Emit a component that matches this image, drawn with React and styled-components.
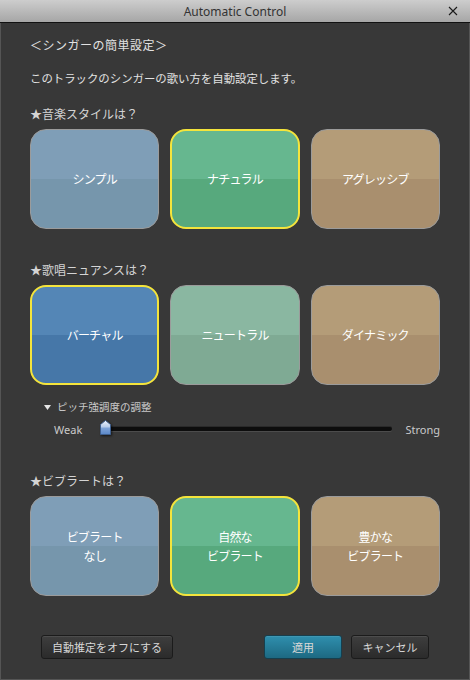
import React from "react";
import { styled, createGlobalStyle } from "styled-components";

const GlobalStyle = createGlobalStyle`
  html, body {
    margin: 0;
    padding: 0;
    background: #383838;
  }
  * {
    box-sizing: border-box;
  }
`;

const palette = {
  slate: ["#7f9eb7", "#7696ac"],
  green: ["#66b78f", "#57a97d"],
  tan: ["#b49c78", "#a98f6e"],
  blue: ["#5486b6", "#4677a8"],
  teal: ["#8ab7a1", "#7faa94"],
};

const sections = [
  {
    title: "★音楽スタイルは？",
    gap: 20,
    options: [
      { label: ["シンプル"], tone: "slate" },
      { label: ["ナチュラル"], tone: "green", selected: true },
      { label: ["アグレッシブ"], tone: "tan" },
    ],
  },
  {
    title: "★歌唱ニュアンスは？",
    gap: 33,
    options: [
      { label: ["バーチャル"], tone: "blue", selected: true },
      { label: ["ニュートラル"], tone: "teal" },
      { label: ["ダイナミック"], tone: "tan" },
    ],
  },
];

const vibrato = {
  title: "★ビブラートは？",
  options: [
    { label: ["ビブラート", "なし"], tone: "slate" },
    { label: ["自然な", "ビブラート"], tone: "green", selected: true },
    { label: ["豊かな", "ビブラート"], tone: "tan" },
  ],
};

const App = () => {
  return (
    <>
      <GlobalStyle />
      <Window>
        <TitleBar>
          <span />
          <Title>Automatic Control</Title>
          <CloseButton>
            <svg width="10" height="10" viewBox="0 0 10 10">
              <path d="M1 1 L9 9 M9 1 L1 9" stroke="#1a1a1a" strokeWidth="1.1" />
            </svg>
          </CloseButton>
        </TitleBar>

        <Body>
          <Heading>＜シンガーの簡単設定＞</Heading>
          <Description>このトラックのシンガーの歌い方を自動設定します。</Description>

          {sections.map((s) => (
            <React.Fragment key={s.title}>
              <SectionLabel $gap={s.gap}>{s.title}</SectionLabel>
              <ChoiceRow>
                {s.options.map((o) => (
                  <Choice key={o.label.join()} $tone={o.tone} $selected={o.selected}>
                    {o.label.map((line) => (
                      <span key={line}>{line}</span>
                    ))}
                  </Choice>
                ))}
              </ChoiceRow>
            </React.Fragment>
          ))}

          <PitchLabel>
            <svg width="7" height="5" viewBox="0 0 7 5">
              <path d="M0 0 H7 L3.5 5 Z" fill="#e6e6e6" />
            </svg>
            ピッチ強調度の調整
          </PitchLabel>
          <SliderRow>
            <SliderText>Weak</SliderText>
            <Track>
              <Thumb>
                <svg width="11" height="15" viewBox="0 0 11 15">
                  <defs>
                    <linearGradient id="thumb" x1="0" y1="0" x2="0" y2="1">
                      <stop offset="0" stopColor="#eef3fb" />
                      <stop offset="0.45" stopColor="#b8cdea" />
                      <stop offset="0.55" stopColor="#7ea3d8" />
                      <stop offset="1" stopColor="#5a87c8" />
                    </linearGradient>
                  </defs>
                  <path
                    d="M5.5 0.5 L10.5 4.5 V14.5 H0.5 V4.5 Z"
                    fill="url(#thumb)"
                    stroke="#3e5f8e"
                    strokeWidth="1"
                  />
                </svg>
              </Thumb>
            </Track>
            <SliderText $end>Strong</SliderText>
          </SliderRow>

          <SectionLabel $gap={36}>{vibrato.title}</SectionLabel>
          <ChoiceRow>
            {vibrato.options.map((o) => (
              <Choice key={o.label.join()} $tone={o.tone} $selected={o.selected}>
                {o.label.map((line) => (
                  <span key={line}>{line}</span>
                ))}
              </Choice>
            ))}
          </ChoiceRow>

          <Footer>
            <DialogButton $wide>自動推定をオフにする</DialogButton>
            <FooterRight>
              <DialogButton $primary>適用</DialogButton>
              <DialogButton>キャンセル</DialogButton>
            </FooterRight>
          </Footer>
        </Body>
      </Window>
    </>
  );
};

export default App;

const jp = `"Noto Sans CJK JP", "Noto Sans", sans-serif`;

const Window = styled.div`
  width: 470px;
  height: 680px;
  display: flex;
  flex-direction: column;
  background: #383838;
  font-family: ${jp};
`;

const TitleBar = styled.div`
  height: 23px;
  display: grid;
  grid-template-columns: 1fr auto 1fr;
  align-items: center;
  background: linear-gradient(#cdcdcd, #a6a6a6);
  border-bottom: 1px solid #111;
`;

const Title = styled.div`
  font-family: "Noto Sans", "Open Sans", sans-serif;
  font-size: 12px;
  color: #333;
  padding-top: 1px;
`;

const CloseButton = styled.div`
  justify-self: end;
  width: 22px;
  margin-right: 6px;
  display: flex;
  justify-content: center;
`;

const Body = styled.div`
  flex: 1;
  display: flex;
  flex-direction: column;
  padding: 14px 29px 0;
  border: 1px solid #555;
  border-top: none;
`;

const Heading = styled.div`
  font-size: 12px;
  line-height: 16px;
  letter-spacing: 0.5px;
  color: #e2e2e2;
`;

const Description = styled.div`
  font-size: 11.4px;
  line-height: 16px;
  color: #e2e2e2;
  margin-top: 17px;
`;

const SectionLabel = styled.div`
  font-size: 12px;
  line-height: 16px;
  color: #d4d4d4;
  margin-top: ${(p) => p.$gap}px;
`;

const ChoiceRow = styled.div`
  display: grid;
  grid-template-columns: repeat(3, 1fr);
  gap: 11px;
  margin-top: 7px;
`;

const Choice = styled.button`
  height: 100px;
  display: flex;
  flex-direction: column;
  align-items: center;
  justify-content: center;
  gap: 3px;
  border-radius: 16px;
  border: ${(p) => (p.$selected ? "2px solid #f4e43c" : "1px solid #9b9b9b")};
  background: linear-gradient(
    ${(p) => palette[p.$tone][0]} 50%,
    ${(p) => palette[p.$tone][1]} 50%
  );
  color: #fff;
  font-family: ${jp};
  font-size: 12px;
  line-height: 16px;
  letter-spacing: -0.8px;
  padding: 0;
  cursor: pointer;
`;

const PitchLabel = styled.div`
  display: flex;
  align-items: center;
  gap: 6px;
  margin: 14px 0 0 14px;
  font-size: 10.5px;
  line-height: 16px;
  color: #c8c8c8;
`;

const SliderRow = styled.div`
  display: flex;
  align-items: center;
  height: 16px;
  margin: 6px 0 0 24px;
`;

const SliderText = styled.div`
  font-family: "Noto Sans", "Open Sans", sans-serif;
  font-size: 11px;
  color: #cacaca;
  width: ${(p) => (p.$end ? "auto" : "46px")};
  margin-left: ${(p) => (p.$end ? "13px" : "0")};
`;

const Track = styled.div`
  position: relative;
  flex: 1;
  height: 4px;
  border-radius: 2px;
  background: #0d0d0d;
  box-shadow: 0 1px 0 #4c4c4c, 0 -1px 0 #2a2a2a;
`;

const Thumb = styled.div`
  position: absolute;
  left: 0;
  top: -7px;
  display: flex;
  filter: drop-shadow(1px 1px 1px rgba(0, 0, 0, 0.6));
`;

const Footer = styled.div`
  display: flex;
  justify-content: space-between;
  margin: 39px 11px 0 11px;
`;

const FooterRight = styled.div`
  display: flex;
  gap: 9px;
`;

const DialogButton = styled.button`
  height: 24px;
  width: ${(p) => (p.$wide ? "132px" : "78px")};
  border-radius: 3px;
  border: 1px solid ${(p) => (p.$primary ? "#163f4e" : "#1b1b1b")};
  background: ${(p) =>
    p.$primary
      ? "linear-gradient(#2f8fae, #1d6982)"
      : "linear-gradient(#3e3e3e, #2b2b2b)"};
  box-shadow: inset 0 1px 0 rgba(255, 255, 255, 0.08);
  color: #d8d8d8;
  font-family: ${jp};
  font-size: 11px;
  padding: 0;
  cursor: pointer;
`;
